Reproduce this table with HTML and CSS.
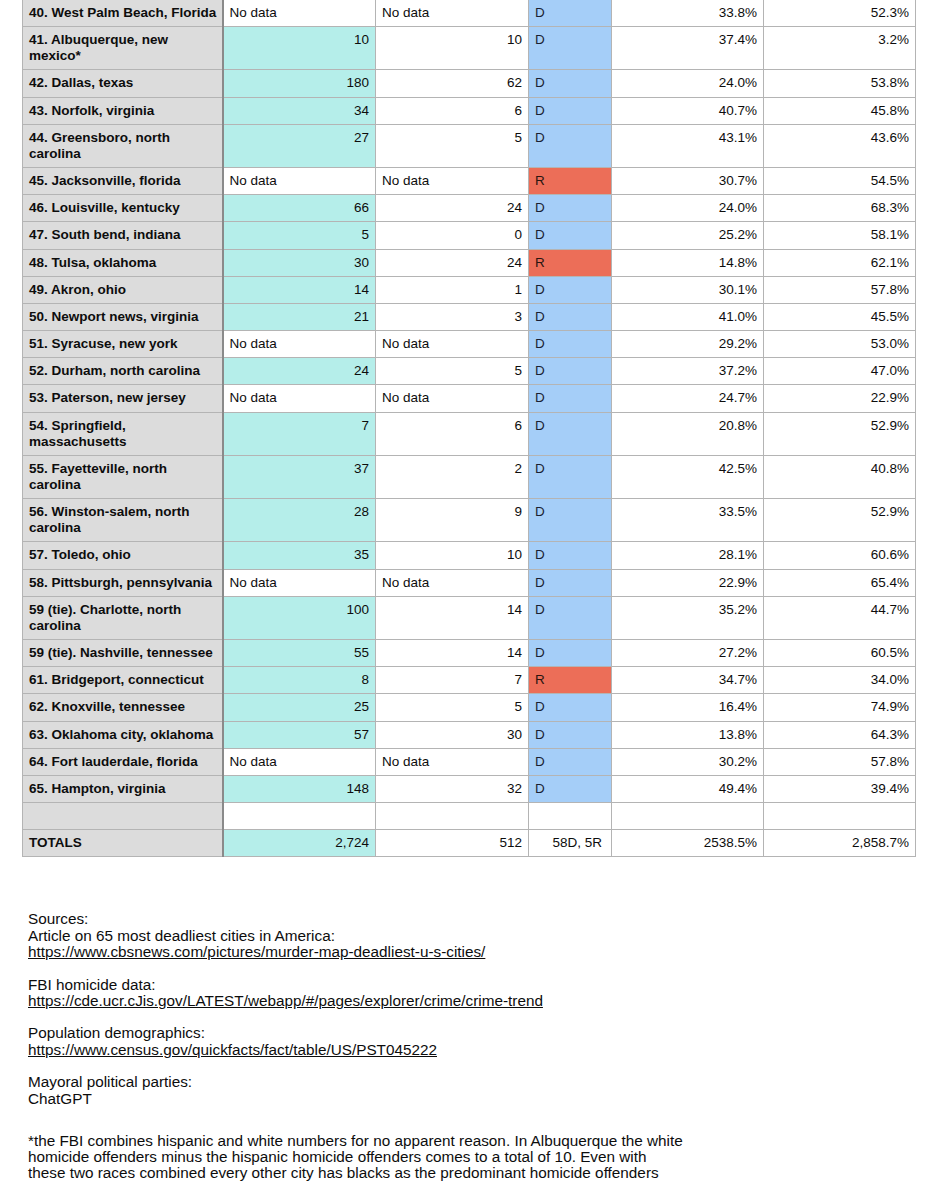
FILE: index.html
```html
<!DOCTYPE html>
<html>
<head>
<meta charset="utf-8">
<link rel="stylesheet" href="styles.css">
</head>
<body>
<table class="grid">
<colgroup>
<col class="c-name"><col class="c-num"><col class="c-num"><col class="c-party"><col class="c-pct"><col class="c-pct">
</colgroup>
<tbody>
<tr><th>40. West Palm Beach, Florida</th><td class="nd">No data</td><td class="nd">No data</td><td class="d">D</td><td>33.8%</td><td>52.3%</td></tr>
<tr><th>41. Albuquerque, new<br>mexico*</th><td class="t">10</td><td>10</td><td class="d">D</td><td>37.4%</td><td>3.2%</td></tr>
<tr><th>42. Dallas, texas</th><td class="t">180</td><td>62</td><td class="d">D</td><td>24.0%</td><td>53.8%</td></tr>
<tr><th>43. Norfolk, virginia</th><td class="t">34</td><td>6</td><td class="d">D</td><td>40.7%</td><td>45.8%</td></tr>
<tr><th>44. Greensboro, north<br>carolina</th><td class="t">27</td><td>5</td><td class="d">D</td><td>43.1%</td><td>43.6%</td></tr>
<tr><th>45. Jacksonville, florida</th><td class="nd">No data</td><td class="nd">No data</td><td class="r">R</td><td>30.7%</td><td>54.5%</td></tr>
<tr><th>46. Louisville, kentucky</th><td class="t">66</td><td>24</td><td class="d">D</td><td>24.0%</td><td>68.3%</td></tr>
<tr><th>47. South bend, indiana</th><td class="t">5</td><td>0</td><td class="d">D</td><td>25.2%</td><td>58.1%</td></tr>
<tr><th>48. Tulsa, oklahoma</th><td class="t">30</td><td>24</td><td class="r">R</td><td>14.8%</td><td>62.1%</td></tr>
<tr><th>49. Akron, ohio</th><td class="t">14</td><td>1</td><td class="d">D</td><td>30.1%</td><td>57.8%</td></tr>
<tr><th>50. Newport news, virginia</th><td class="t">21</td><td>3</td><td class="d">D</td><td>41.0%</td><td>45.5%</td></tr>
<tr><th>51. Syracuse, new york</th><td class="nd">No data</td><td class="nd">No data</td><td class="d">D</td><td>29.2%</td><td>53.0%</td></tr>
<tr><th>52. Durham, north carolina</th><td class="t">24</td><td>5</td><td class="d">D</td><td>37.2%</td><td>47.0%</td></tr>
<tr><th>53. Paterson, new jersey</th><td class="nd">No data</td><td class="nd">No data</td><td class="d">D</td><td>24.7%</td><td>22.9%</td></tr>
<tr><th>54. Springfield,<br>massachusetts</th><td class="t">7</td><td>6</td><td class="d">D</td><td>20.8%</td><td>52.9%</td></tr>
<tr><th>55. Fayetteville, north<br>carolina</th><td class="t">37</td><td>2</td><td class="d">D</td><td>42.5%</td><td>40.8%</td></tr>
<tr><th>56. Winston-salem, north<br>carolina</th><td class="t">28</td><td>9</td><td class="d">D</td><td>33.5%</td><td>52.9%</td></tr>
<tr><th>57. Toledo, ohio</th><td class="t">35</td><td>10</td><td class="d">D</td><td>28.1%</td><td>60.6%</td></tr>
<tr><th>58. Pittsburgh, pennsylvania</th><td class="nd">No data</td><td class="nd">No data</td><td class="d">D</td><td>22.9%</td><td>65.4%</td></tr>
<tr><th>59 (tie). Charlotte, north<br>carolina</th><td class="t">100</td><td>14</td><td class="d">D</td><td>35.2%</td><td>44.7%</td></tr>
<tr><th>59 (tie). Nashville, tennessee</th><td class="t">55</td><td>14</td><td class="d">D</td><td>27.2%</td><td>60.5%</td></tr>
<tr><th>61. Bridgeport, connecticut</th><td class="t">8</td><td>7</td><td class="r">R</td><td>34.7%</td><td>34.0%</td></tr>
<tr><th>62. Knoxville, tennessee</th><td class="t">25</td><td>5</td><td class="d">D</td><td>16.4%</td><td>74.9%</td></tr>
<tr><th>63. Oklahoma city, oklahoma</th><td class="t">57</td><td>30</td><td class="d">D</td><td>13.8%</td><td>64.3%</td></tr>
<tr><th>64. Fort lauderdale, florida</th><td class="nd">No data</td><td class="nd">No data</td><td class="d">D</td><td>30.2%</td><td>57.8%</td></tr>
<tr><th>65. Hampton, virginia</th><td class="t">148</td><td>32</td><td class="d">D</td><td>49.4%</td><td>39.4%</td></tr>
<tr><th>&nbsp;</th><td></td><td></td><td></td><td></td><td></td></tr>
<tr><th>TOTALS</th><td class="t">2,724</td><td>512</td><td class="tot-party">58D, 5R</td><td>2538.5%</td><td>2,858.7%</td></tr>
</tbody>
</table>

<div class="notes">
<p>Sources:<br>Article on 65 most deadliest cities in America:<br><a href="#">https://www.cbsnews.com/pictures/murder-map-deadliest-u-s-cities/</a></p>
<p>FBI homicide data:<br><a href="#">https://cde.ucr.cJis.gov/LATEST/webapp/#/pages/explorer/crime/crime-trend</a></p>
<p>Population demographics:<br><a href="#">https://www.census.gov/quickfacts/fact/table/US/PST045222</a></p>
<p class="mayor">Mayoral political parties:<br>ChatGPT</p>
<p>*the FBI combines hispanic and white numbers for no apparent reason. In Albuquerque the white<br>homicide offenders minus the hispanic homicide offenders comes to a total of 10. Even with<br>these two races combined every other city has blacks as the predominant homicide offenders</p>
</div>
</body>
</html>
```

FILE: styles.css
```css
html, body {
  margin: 0;
  padding: 0;
  background: #ffffff;
}

body {
  font-family: "Liberation Sans", Arial, Helvetica, sans-serif;
  color: #0d0d0d;
}

.grid {
  border-collapse: collapse;
  table-layout: fixed;
  width: 892px;
  margin: -1px 0 0 22px;
  font-size: 13.5px;
  line-height: 16.15px;
}

.c-name { width: 200px; }
.c-num { width: 153px; }
.c-party { width: 83px; }
.c-pct { width: 152px; }

.grid th,
.grid td {
  border: 1px solid #b4b4b4;
  padding: 5px 6px 5px 6px;
  vertical-align: top;
  text-align: right;
  white-space: nowrap;
  overflow: hidden;
}

.grid th {
  background: #dcdcdc;
  font-weight: bold;
  text-align: left;
  border-right: 2px solid #8a8a8a;
}

.grid td.t {
  background: #b5eeea;
}

.grid td.nd {
  text-align: left;
}

.grid td.d {
  background: #a5cef8;
  text-align: left;
  color: #1a1f33;
}

.grid td.r {
  background: #ec6e58;
  text-align: left;
  color: #2a1510;
}

.grid td.tot-party {
  padding-right: 9px;
}

.notes {
  margin: 54px 0 0 28px;
  font-size: 15.3px;
  line-height: 16.3px;
  color: #0d0d0d;
}

.notes p {
  margin: 0 0 16.3px 0;
}

.notes p.mayor {
  margin-bottom: 26px;
}

.notes a {
  color: #0d0d0d;
  text-decoration: underline;
}
```
